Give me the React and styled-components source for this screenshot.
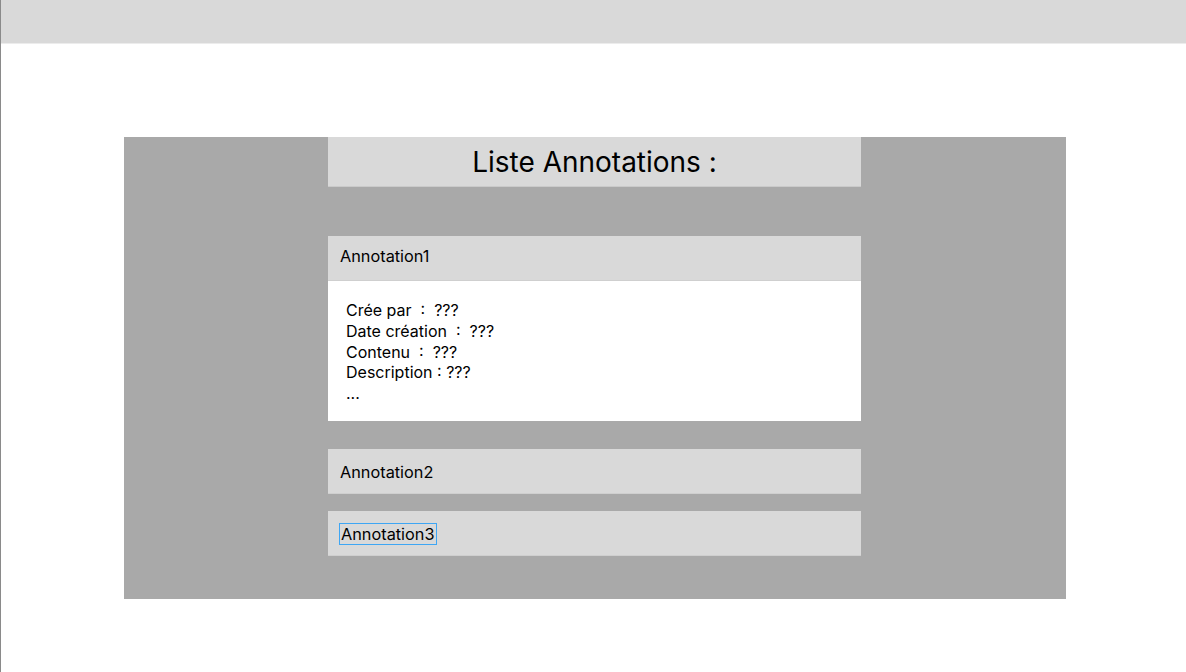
import React from 'react';
import styled, { createGlobalStyle } from 'styled-components';

const GlobalStyle = createGlobalStyle`
  html, body {
    margin: 0;
    padding: 0;
    background: #fff;
    font-family: Inter, "Noto Sans", sans-serif;
    color: #000;
  }
`;

const annotations = [
  {
    name: 'Annotation1',
    open: true,
    details: ['Crée par  :  ???', 'Date création  :  ???', 'Contenu  :  ???', 'Description : ???', '...'],
  },
  { name: 'Annotation2' },
  { name: 'Annotation3', focused: true },
];

function App() {
  return (
    <Page>
      <GlobalStyle />
      <TopBar />
      <Panel>
        <Column>
          <Title>Liste Annotations :</Title>
          <List>
            {annotations.map((a) => (
              <Item key={a.name} $open={a.open}>
                <Header $open={a.open}>
                  {a.focused ? <Focused>{a.name}</Focused> : a.name}
                </Header>
                {a.open && (
                  <Body>
                    {a.details.map((d) => (
                      <Line key={d}>{d}</Line>
                    ))}
                  </Body>
                )}
              </Item>
            ))}
          </List>
        </Column>
      </Panel>
    </Page>
  );
}

export default App;

const Page = styled.div`
  min-height: 100vh;
  box-sizing: border-box;
  border-left: 1px solid #8a8a8a;
  overflow: hidden;
`;

const TopBar = styled.div`
  height: 43px;
  background: #d9d9d9;
  border-bottom: 1px solid #ececec;
`;

const Panel = styled.div`
  margin: 93px 0 0 123px;
  width: 942px;
  height: 462px;
  background: #a9a9a9;
  display: flex;
  justify-content: center;
`;

const Column = styled.div`
  width: 533px;
  margin-right: 1px;
  display: flex;
  flex-direction: column;
`;

const Title = styled.h1`
  margin: 0;
  height: 50px;
  background: #d9d9d9;
  border-bottom: 1px solid #cacaca;
  box-sizing: border-box;
  display: flex;
  align-items: center;
  justify-content: center;
  font-size: 28px;
  font-weight: 400;
  padding-top: 1px;
`;

const List = styled.div`
  margin-top: 49px;
  display: flex;
  flex-direction: column;
`;

const Item = styled.div`
  margin-bottom: ${(p) => (p.$open ? '28px' : '17px')};
`;

const Header = styled.div`
  height: 45px;
  background: #d9d9d9;
  border-bottom: 1px solid #cfcfcf;
  box-sizing: border-box;
  display: flex;
  align-items: center;
  padding-left: 12px;
  padding-top: ${(p) => (p.$open ? '0' : '2px')};
  padding-bottom: ${(p) => (p.$open ? '4px' : '0')};
  font-size: 16.3px;
  white-space: pre;
`;

const Focused = styled.span`
  margin-left: -1px;
  padding: 0 1px;
  border: 1.5px solid #3ea6f4;
  line-height: 20px;
`;

const Body = styled.div`
  height: 140px;
  box-sizing: border-box;
  background: #fff;
  padding: 19px 18px 0;
`;

const Line = styled.div`
  font-size: 16px;
  line-height: 20.8px;
  white-space: pre;
`;
